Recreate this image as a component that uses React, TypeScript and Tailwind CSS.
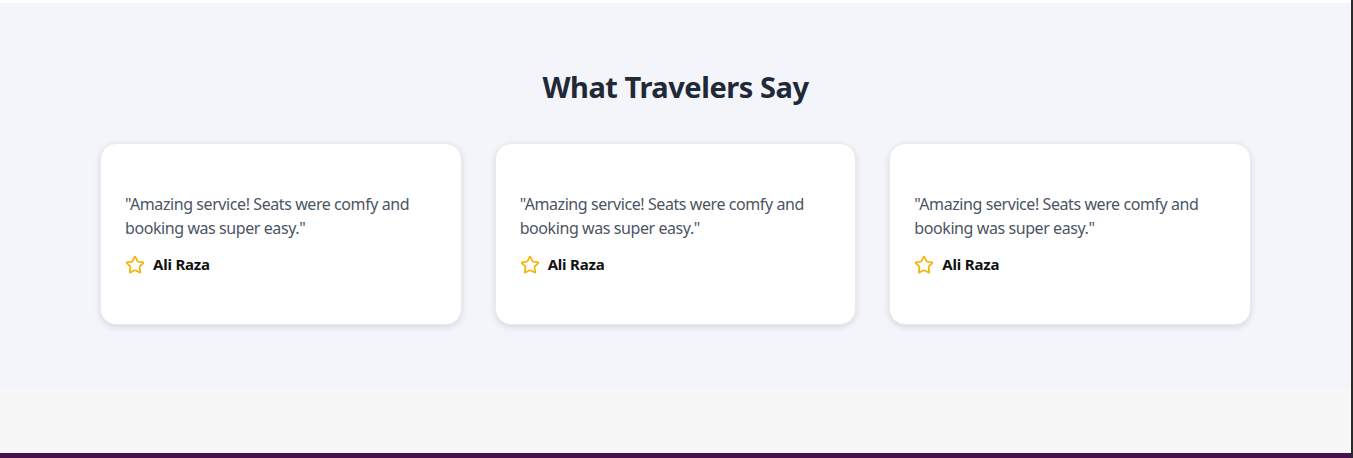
import React from "react";
import { Star } from "lucide-react";

const reviews = [
  { text: '"Amazing service! Seats were comfy and booking was super easy."', name: "Ali Raza" },
  { text: '"Amazing service! Seats were comfy and booking was super easy."', name: "Ali Raza" },
  { text: '"Amazing service! Seats were comfy and booking was super easy."', name: "Ali Raza" },
];

export default function App() {
  return (
    <div
      className="flex w-[1353px] h-[458px] bg-[#2b2b2b]"
      style={{ fontFamily: '"Noto Sans", "Open Sans", sans-serif' }}
    >
      <div className="flex flex-col w-[1351px] h-full">
        <div className="h-[3px] bg-white" />
        <section className="bg-[#f4f5fa] h-[386px] pt-[66px] flex flex-col items-center">
          <h2 className="text-[29px] leading-[36px] font-bold text-[#1f2937] tracking-[-0.45px] mb-[38px]">
            What Travelers Say
          </h2>
          <div className="grid grid-cols-3 gap-[33px] w-[1151px]">
            {reviews.map((r, i) => (
              <div
                key={i}
                className="h-[182px] bg-white rounded-2xl border border-[#e9eaf0] shadow-[0_2px_6px_rgba(0,0,0,0.12)] px-6 flex flex-col justify-center"
              >
                <p className="text-[16px] leading-[24px] text-[#4b5563] tracking-[-0.42px] pr-4">{r.text}</p>
                <div className="flex items-center gap-2 mt-[13px]">
                  <Star className="w-5 h-5 text-[#f4b400]" strokeWidth={2} />
                  <span className="text-[15px] font-bold text-[#111111] tracking-[-0.2px]">{r.name}</span>
                </div>
              </div>
            ))}
          </div>
        </section>
        <div className="flex-1 bg-[#f7f7f8]" />
        <div className="h-[5px] bg-[#46124a]" />
      </div>
    </div>
  );
}
